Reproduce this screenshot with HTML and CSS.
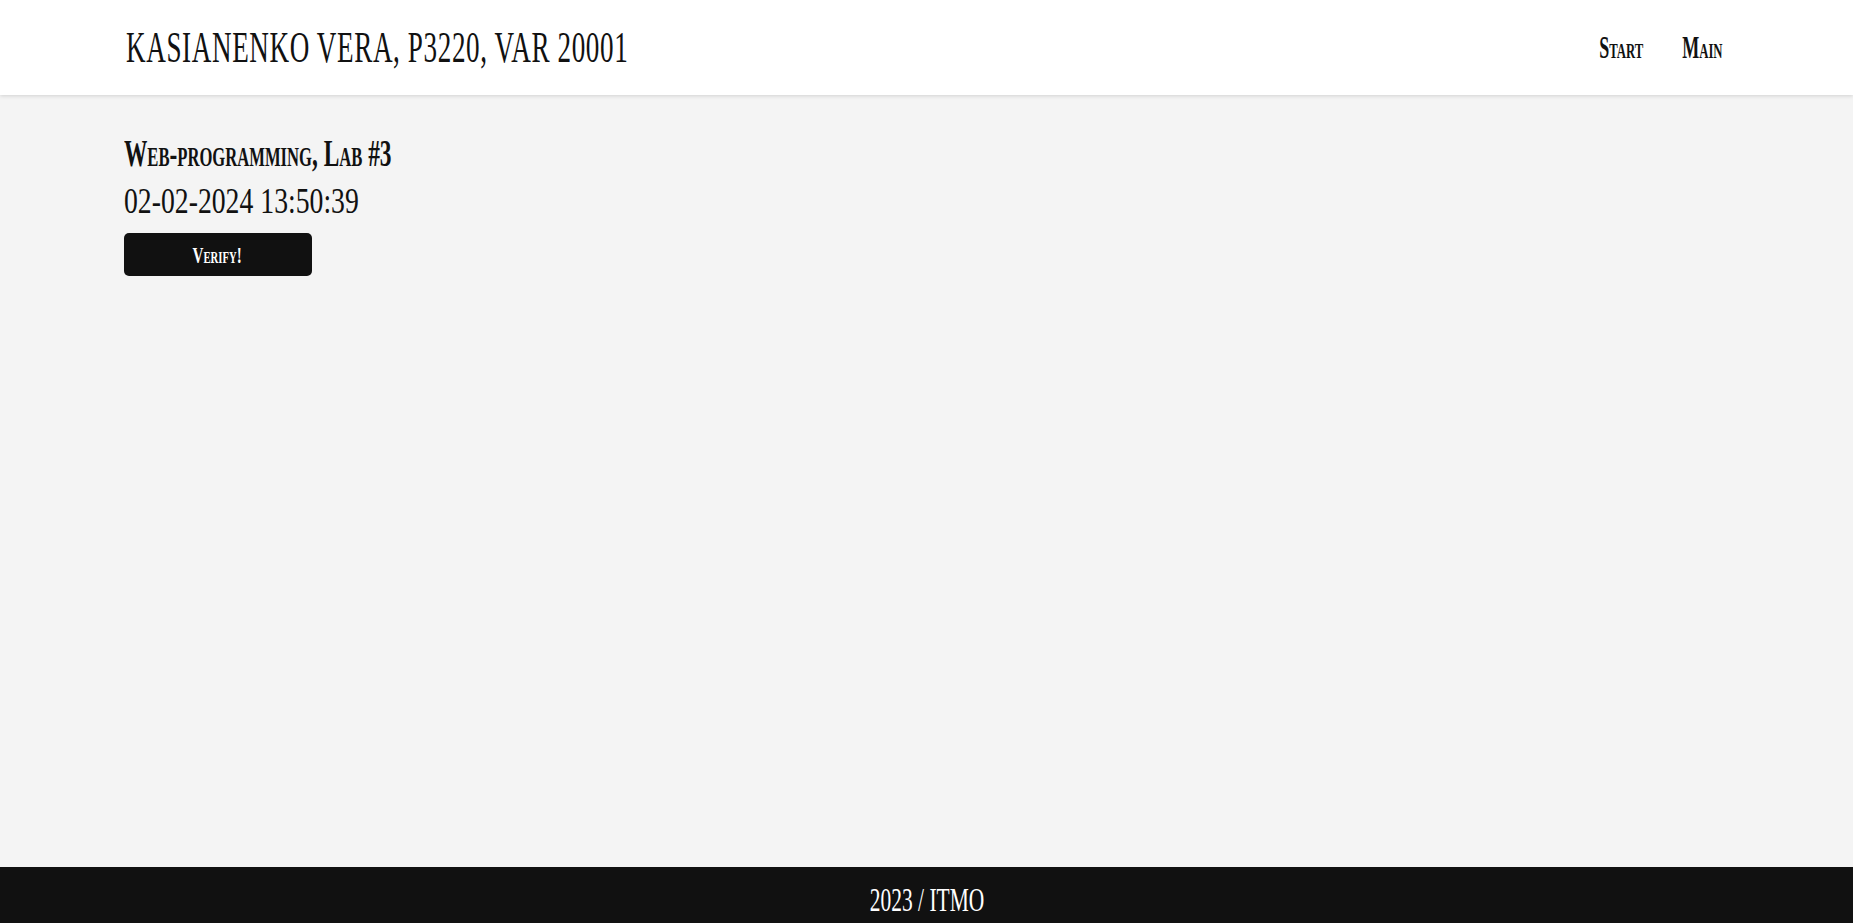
FILE: index.html
```html
<!DOCTYPE html>
<html lang="en">
<head>
<meta charset="utf-8">
<title>Lab #3</title>
<link rel="stylesheet" href="styles.css">
</head>
<body>
<header class="site-header">
  <div class="container header-inner">
    <h1 class="brand"><span class="squeeze squeeze-title">KASIANENKO VERA, P3220, VAR 20001</span></h1>
    <nav class="nav">
      <div class="nav-links">
        <a class="nav-link" href="#">Start</a>
        <a class="nav-link" href="#">Main</a>
      </div>
    </nav>
  </div>
</header>
<main class="content">
  <div class="container">
    <h2 class="lab-title"><span class="squeeze squeeze-heading">Web-programming, Lab #3</span></h2>
    <div class="clock"><span class="squeeze squeeze-clock">02-02-2024 13:50:39</span></div>
    <button class="verify-btn" type="button"><span class="squeeze squeeze-btn">Verify!</span></button>
  </div>
</main>
<footer class="site-footer">
  <span class="squeeze squeeze-footer">2023 / ITMO</span>
</footer>
</body>
</html>
```
FILE: styles.css
```css
* { box-sizing: border-box; }

html, body {
  margin: 0;
  padding: 0;
}

body {
  min-height: 100vh;
  display: flex;
  flex-direction: column;
  background: #f4f4f4;
  color: #111;
  font-family: "Liberation Serif", "Times New Roman", serif;
}

.container {
  width: 1606px;
  margin: 0 auto;
}

.squeeze {
  display: inline-block;
  white-space: nowrap;
  transform-origin: left center;
}

/* header */
.site-header {
  height: 95px;
  background: #fff;
  box-shadow: 0 1px 4px rgba(0, 0, 0, 0.14);
  position: relative;
  z-index: 1;
}

.header-inner {
  height: 100%;
  display: flex;
  align-items: center;
  justify-content: space-between;
}

.brand {
  margin: 0 0 0 2px;
  font-size: 45px;
  line-height: 45px;
  font-weight: normal;
}

.squeeze-title {
  transform: scaleX(0.603);
  letter-spacing: 1px;
}

.nav {
  margin-right: 7px;
}

.nav-links {
  display: flex;
  gap: 67px;
  transform: scaleX(0.58);
  transform-origin: right center;
}

.nav-link {
  color: #111;
  text-decoration: none;
  font-size: 31px;
  line-height: 31px;
  font-weight: bold;
  font-variant: small-caps;
}

/* main */
.content {
  flex: 1;
  padding-top: 39px;
}

.lab-title {
  margin: 0;
  font-size: 38px;
  line-height: 38px;
  font-weight: bold;
  font-variant: small-caps;
}

.squeeze-heading {
  transform: scaleX(0.615);
}

.clock {
  margin-top: 11px;
  font-size: 36px;
  line-height: 36px;
}

.squeeze-clock {
  transform: scaleX(0.77);
}

.verify-btn {
  display: flex;
  justify-content: center;
  margin-top: 14px;
  width: 188px;
  height: 43px;
  padding: 2px 0 0;
  border: none;
  border-radius: 5px;
  background: #111;
  color: #fff;
  font-family: "Liberation Serif", "Times New Roman", serif;
  font-size: 24px;
  line-height: 41px;
  font-weight: bold;
  font-variant: small-caps;
  cursor: pointer;
}

.squeeze-btn {
  transform: scaleX(0.63);
  transform-origin: center center;
}

/* footer */
.site-footer {
  height: 56px;
  padding-top: 10px;
  background: #111;
  color: #fff;
  text-align: center;
  font-size: 33px;
  line-height: 46px;
}

.squeeze-footer {
  transform: scaleX(0.65);
  transform-origin: center center;
}
```
